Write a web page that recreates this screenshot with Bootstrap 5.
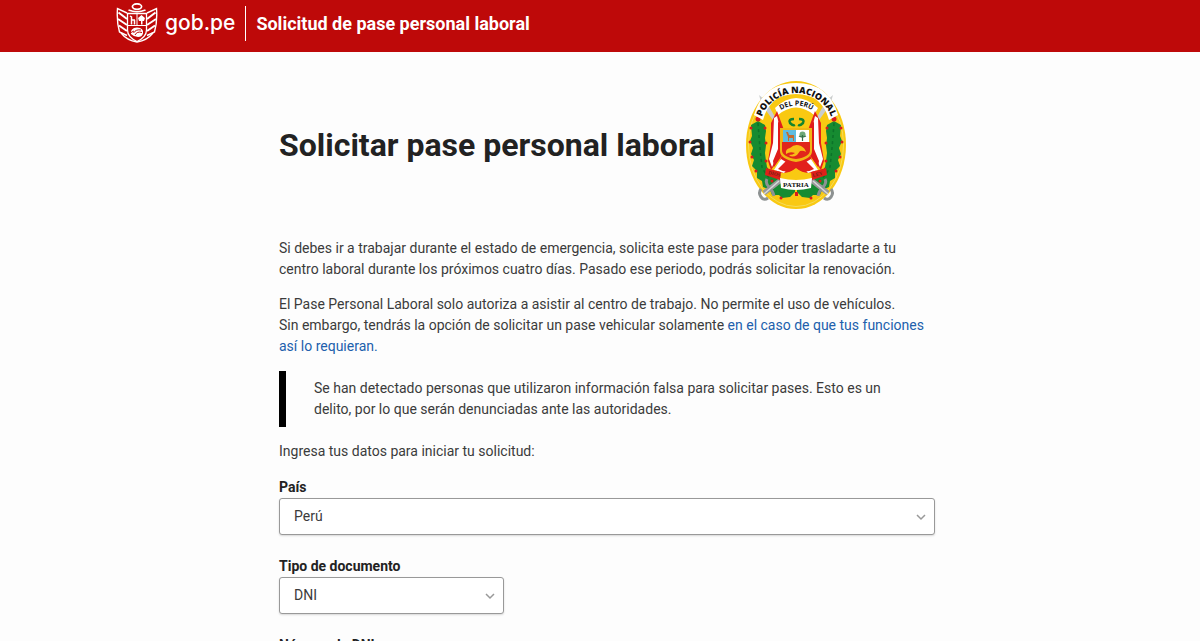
<!DOCTYPE html>
<html lang="es">
<head>
<meta charset="utf-8">
<meta name="viewport" content="width=device-width, initial-scale=1">
<title>Solicitud de pase personal laboral</title>
<link href="https://cdn.jsdelivr.net/npm/bootstrap@5.3.0/dist/css/bootstrap.min.css" rel="stylesheet">
<style>
  body { font: 14px/21px Roboto, "Liberation Sans", sans-serif; color: #3b3b3b; background: #fdfdfd; }
  .page-wrap { max-width: 1000px; padding: 0 1px 0 15px; }
  .site-header { background: #be0909; min-height: 52px; }
  .header-row { padding-top: 3px; }
  .brand { font: 500 21px/28px Inter, "Liberation Sans", sans-serif; gap: 7px; margin-right: 10px; }
  .service-name { font-size: 18px; line-height: 35px; border-left: 1px solid #fff; padding-left: 10px; margin-top: 1px; }
  .hero { min-height: 186px; gap: 31px; }
  h1 { font-size: 32px; line-height: 40px; font-weight: 700; color: #222; }
  p, blockquote { margin: 0 0 14px; }
  .content-link { color: #2160ac; }
  .warning-note { border-left: 7px solid #000; padding: 7px 28px; }
  .request-form { padding-top: 1px; }
  .field { margin-bottom: 21px; }
  .field label { display: block; font-weight: 700; color: #222; }
  .field .form-select, .field .form-control {
    height: 37px; font-size: 14px; line-height: 21px; padding: 6px 34px 6px 14px; color: #3b3b3b;
    border: 1px solid #999; border-radius: 3px; box-shadow: 0 1px 2px rgba(0,0,0,.15); background-color: #fff;
  }
  .field .form-select {
    background-image: url("data:image/svg+xml,%3Csvg xmlns='http://www.w3.org/2000/svg' viewBox='0 0 10 10'%3E%3Cpath d='M1 3l4 4 4-4' fill='none' stroke='%23999' stroke-width='1.5'/%3E%3C/svg%3E");
    background-size: 10px 10px; background-position: right 8px center;
  }
  .short { width: 225px; max-width: 100%; }
  .crest-title { font: 800 9px "Open Sans", "DejaVu Sans", sans-serif; }
  .crest-sub { font: 700 7px "Open Sans", "DejaVu Sans", sans-serif; }
  .crest-motto { font: 700 7px "Liberation Serif", serif; }
  .crest-side { font: 700 5px "Liberation Serif", serif; }
</style>
</head>
<body>
<header class="site-header text-white">
  <div class="container page-wrap header-row d-flex align-items-center">
    <a href="#" class="brand d-flex align-items-center text-white text-decoration-none">
      <svg width="43" height="40" viewBox="-1 0 43 40" aria-hidden="true" fill="none" stroke="#fff">
        <ellipse cx="21" cy="3.6" rx="4.6" ry="2.8" stroke-width="1.7"/>
        <path d="M12.500 7Q21 10.500 29.500 7" stroke-width="1.700"/>
        <path d="M11.500 10.500H30.500V27Q30.500 34 21 38.500Q11.500 34 11.500 27Z" stroke-width="1.300"/>
        <path d="M11.500 22.500H30.500M21 10.500V22.500" stroke-width="1"/>
        <path d="M14 13l1.500 1V17H19M15.500 21.500V17M18.500 21.500V17" stroke-width="1.500"/>
        <path d="M25.500 12l3.500 3-1 3h-5l-1-3ZM25 17h1.500v4.500H25Z" fill="#fff" stroke="none"/>
        <path d="M15 31Q14 25 21 24.500Q28 25 27 30.500Q26 34 22 34Q18 34 15 31Z" fill="#fff" stroke="none"/>
        <path d="M17.500 30Q20 26 25 27M19 32Q21 28 26 29.500M14 30l4-2" stroke="#be0909" stroke-width="1"/>
        <path d="M11 10L1.500 5.500Q.5 19 3.500 29L11 32.500M31 10L40.500 5.500Q41.500 19 38.500 29L31 32.500" stroke-width="1.400"/>
        <path d="M2.500 9.500L11 16M2 16L11 22M3 22.500L11 28M39.500 9.500L31 16M40 16L31 22M39 22.500L31 28" stroke-width="2"/>
        <path d="M5 30q6 7.500 16 9q10-1.500 16-9" stroke-width="1.300"/>
      </svg>
      <span>gob.pe</span>
    </a>
    <span class="service-name fw-bold">Solicitud de pase personal laboral</span>
  </div>
</header>

<main class="container page-wrap">
  <div class="row g-0">
    <div class="col-12 col-md-8 offset-md-2">
      <div class="hero d-flex align-items-center">
        <h1 class="m-0">Solicitar pase personal laboral</h1>
        <svg class="flex-shrink-0" width="100" height="128" viewBox="0 0 100 128" role="img" aria-label="Policía Nacional del Perú">
          <defs>
            <path id="arcTitle" d="M15 38A37 36 0 0 1 86 38"/>
            <path id="arcSub" d="M32 31Q50 18 69 31"/>
            <g id="laurel">
              <path d="M5 44l7-4 7 4 1 6-1 7 1 7-1 8 1 8 1 6 4 6 6 5 7 2 5 4 6 3 0 5-5 5-8 1-3-3-7 0-2-5-7-3-1-6-5-3 0-7-5-5 2-6-3-6 2-6-3-7 2-5Z" fill="#168b31"/>
              <path d="M12 42q2 28 4 44q7 16 29 23" fill="none" stroke="#0c7229" stroke-width="1.500" stroke-dasharray="3 3"/>
              <g fill="#d81c1c"><circle cx="12" cy="38" r="2.500"/><circle cx="5" cy="47" r="1.500"/><circle cx="19" cy="47" r="1.500"/><circle cx="4" cy="61" r="1.500"/><circle cx="20" cy="62" r="1.500"/><circle cx="6" cy="76" r="1.500"/><circle cx="20" cy="80" r="1.500"/><circle cx="10" cy="90" r="1.500"/><circle cx="26" cy="100" r="1.500"/><circle cx="35" cy="117" r="1.500"/></g>
            </g>
            <g id="sword">
              <path d="M13 14l7 6 14 25-2 1L16 24Z" fill="#c9cccc"/>
              <path d="M35 99L18 112" stroke="#999" stroke-width="5"/>
              <path d="M21 98q-2 4 2 8t5 9M15 108q-3 4 0 8t7 1" fill="none" stroke="#8d9292" stroke-width="3"/>
              <path d="M33 100L18 113" stroke="#d7d9d9" stroke-width="1.500"/>
            </g>
            <g id="banner">
              <path d="M25 42l6-12 7 19-1 24-12 16-3-9 3-18Z" fill="#e2201c"/>
              <path d="M28 37l3-2 3 12-1 24-7 15-3-8 4-16Z" fill="#fff"/>
              <path d="M32 40l5 9v24l-9 13-1-6 5-12Z" fill="#df1d1b"/>
            </g>
          </defs>
          <ellipse cx="50" cy="64" rx="50" ry="64" fill="#f9c912"/>
          <ellipse cx="50" cy="64" rx="47.500" ry="61.500" fill="none" stroke="#f4dc5b" stroke-width="1"/>
          <use href="#laurel"/><use href="#laurel" transform="matrix(-1 0 0 1 100 0)"/>
          <use href="#sword"/><use href="#sword" transform="matrix(-1 0 0 1 100 0)"/>
          <path d="M8 34Q17 2 50 2Q83 2 92 34L83 39Q76 13 50 13Q24 13 17 39Z" fill="#fff"/>
          <path d="M29 27Q50 7 72 27L68 34Q50 19 32 34Z" fill="#fff"/>
          <text class="crest-title" fill="#111" text-anchor="middle"><textPath href="#arcTitle" startOffset="50%">POLICÍA NACIONAL</textPath></text>
          <text class="crest-sub" fill="#111" text-anchor="middle"><textPath href="#arcSub" startOffset="50%">DEL PERÚ</textPath></text>
          <use href="#banner"/><use href="#banner" transform="matrix(-1 0 0 1 100 0)"/>
          <path d="M36 74L30 90Q40 95 50 87Q60 95 70 90L64 74Z" fill="#e2201c"/>
          <path d="M35 78L28 89L38 92L45 84ZM65 78L72 89L62 92L55 84Z" fill="#fff"/>
          <path d="M40 80L32 88Q43 94 50 86Q57 94 68 88L60 80Z" fill="#e2201c"/>
          <path d="M48 38q-6 0-4 4q3 3 5 2M53 38q6 0 4 4q-3 3-5 2" fill="none" stroke="#16852e" stroke-width="2.500"/>
          <path d="M34 47H66V70Q66 78 50 81Q34 78 34 70Z" fill="#f1b715"/>
          <path d="M37 49H50V61H37Z" fill="#5fbce0"/><path d="M50 49H63V61H50Z" fill="#fff"/>
          <path d="M36 61H64V69Q64 76 50 78Q36 76 36 69Z" fill="#e1261b"/>
          <path d="M40 51h2l1 3h5v6h-1v-3h-4v3h-1v-4Z" fill="#c56a2d"/>
          <circle cx="56.500" cy="53.500" r="3" fill="#6da879"/><path d="M53 55q3 2 7 0M56.500 54v6" fill="none" stroke="#35704a" stroke-width="1.200"/>
          <path d="M40 73q-1-5 4-6q5-5 11-2q4 2 5 6q-3-2-6-1l-3 4q-5 3-8 0q4 0 6-2q-5-2-9 1Z" fill="#f9bd17"/>
          <path d="M20 87l15 4-1 8-15-5ZM80 87l-15 4 1 8 15-5Z" fill="#df2019"/>
          <text class="crest-side" fill="#762018" x="22" y="93" transform="rotate(14 22 93)">DIOS</text>
          <text class="crest-side" fill="#762018" x="67" y="96" transform="rotate(-14 67 96)">LEY</text>
          <path d="M34 97Q50 101 66 97L65 107Q50 111 35 107Z" fill="#fff"/>
          <text class="crest-motto" fill="#111" x="50" y="106" text-anchor="middle">PATRIA</text>
          <path d="M49 111h3v4h-3Z" fill="#d81c1c"/>
        </svg>
      </div>
      <p>Si debes ir a trabajar durante el estado de emergencia, solicita este pase para poder trasladarte a tu centro laboral durante los próximos cuatro días. Pasado ese periodo, podrás solicitar la renovación.</p>
      <p>El Pase Personal Laboral solo autoriza a asistir al centro de trabajo. No permite el uso de vehículos.<br>Sin embargo, tendrás la opción de solicitar un pase vehicular solamente <a href="#" class="content-link text-decoration-none">en el caso de que tus funciones así lo requieran.</a></p>
      <blockquote class="warning-note">Se han detectado personas que utilizaron información falsa para solicitar pases. Esto es un delito, por lo que serán denunciadas ante las autoridades.</blockquote>
      <p>Ingresa tus datos para iniciar tu solicitud:</p>
      <form class="request-form">
        <div class="field"><label for="pais">País</label><select id="pais" class="form-select"><option>Perú</option></select></div>
        <div class="field"><label for="tipo">Tipo de documento</label><select id="tipo" class="form-select short"><option>DNI</option></select></div>
        <div class="field"><label for="dni">Número de DNI</label><input id="dni" type="text" class="form-control short"></div>
      </form>
    </div>
  </div>
</main>
<script src="https://cdn.jsdelivr.net/npm/bootstrap@5.3.0/dist/js/bootstrap.bundle.min.js"></script>
</body>
</html>
